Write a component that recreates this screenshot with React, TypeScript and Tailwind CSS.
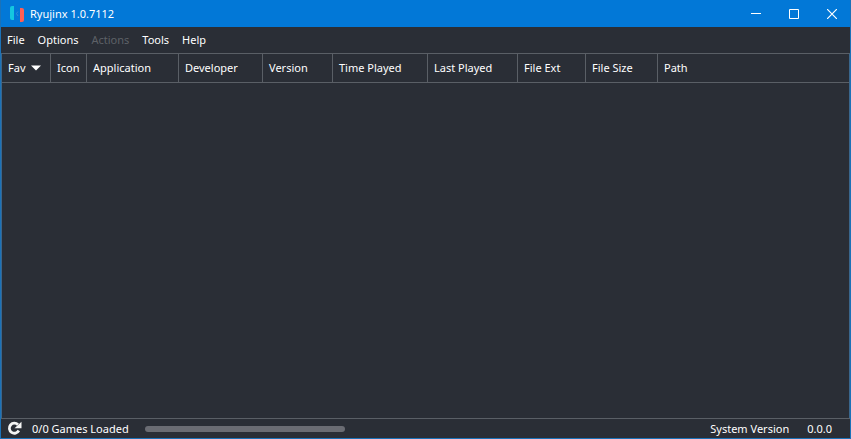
import { useState } from 'react'
import clsx from 'clsx'

type Column = {
  label: string
  width: string
}

const MENU = [
  { label: 'File' },
  { label: 'Options' },
  { label: 'Actions', disabled: true },
  { label: 'Tools' },
  { label: 'Help' },
]

const COLUMNS: Column[] = [
  { label: 'Fav',         width: 'w-[49px]' },
  { label: 'Icon',        width: 'w-9' },
  { label: 'Application', width: 'w-[92px]' },
  { label: 'Developer',   width: 'w-[84px]' },
  { label: 'Version',     width: 'w-[70px]' },
  { label: 'Time Played', width: 'w-[95px]' },
  { label: 'Last Played', width: 'w-[90px]' },
  { label: 'File Ext',    width: 'w-[68px]' },
  { label: 'File Size',   width: 'w-[72px]' },
  { label: 'Path',        width: 'w-auto' },
]

function Logo() {
  return (
    <svg width="16" height="18" viewBox="0 0 16 18" aria-hidden="true">
      <path d="M5 1v14H3A2 2 0 0 1 1 13V3A2 2 0 0 1 3 1z" fill="#14c8e0" />
      <path d="M11 3h2A2 2 0 0 1 15 5v10A2 2 0 0 1 13 17h-2z" fill="#ff5f55" />
      <path d="M9 6.500 7.500 8.500 9 11" fill="none" stroke="#3f93d6" strokeWidth=".8" />
    </svg>
  )
}

function RefreshIcon() {
  return (
    <svg width="16" height="16" viewBox="0 0 16 16" aria-hidden="true">
      <path d="M12 3.800A5 5 0 1 0 12.800 9.500" fill="none" stroke="#f4f4f4" strokeWidth="2.800" />
      <path d="M15.500 .8v6.500H8.500z" fill="#f4f4f4" />
    </svg>
  )
}

function TitleBar() {
  const button = 'flex w-[38px] items-center justify-center hover:bg-white/10'
  return (
    <header className="flex h-[27px] shrink-0 bg-[#0278d7] pl-2">
      <div className="flex flex-1 items-center gap-[5px]">
        <Logo />
        <h1>Ryujinx 1.0.7112</h1>
      </div>
      <div className="-mr-px flex">
        <button className={button} aria-label="Minimize">
          <svg width="10" height="10" viewBox="0 0 10 10"><path d="M0 4.500h10" stroke="#fff" /></svg>
        </button>
        <button className={button} aria-label="Maximize">
          <svg width="10" height="10" viewBox="0 0 10 10"><path d="M.5.5h9v9h-9z" fill="none" stroke="#fff" /></svg>
        </button>
        <button className={button} aria-label="Close">
          <svg width="10" height="10" viewBox="0 0 10 10"><path d="m0 0 10 10M10 0 0 10" stroke="#fff" strokeWidth="1.200" /></svg>
        </button>
      </div>
    </header>
  )
}

function GameTable() {
  const [sorted, setSorted] = useState('Fav')

  return (
    <main className="min-h-0 flex-1 overflow-auto border-x border-t border-[#5a5f66] border-l-[#3a668c] border-r-[#3a668c]">
      <table className="w-full table-fixed border-separate border-spacing-0">
        <thead>
          <tr>
            {COLUMNS.map(({ label, width }) => (
              <th
                key={label}
                className={clsx('h-[29px] border-r border-b border-[#5a5f66] p-0 text-left font-normal last:border-r-0', width)}
              >
                <button
                  onClick={() => setSorted(label)}
                  className="flex w-full items-center gap-1.5 pl-1.5 whitespace-nowrap"
                >
                  {label}
                  {sorted === label && (
                    <svg width="10" height="6" viewBox="0 0 10 6" aria-hidden="true">
                      <path d="M0 .5h10L5 5.500z" fill="#fff" />
                    </svg>
                  )}
                </button>
              </th>
            ))}
          </tr>
        </thead>
        <tbody />
      </table>
    </main>
  )
}

function StatusBar() {
  return (
    <footer className="flex h-5 shrink-0 items-center border-t border-[#5a5f66] pr-[18px] pl-[5px]">
      <button aria-label="Refresh">
        <RefreshIcon />
      </button>
      <span className="ml-2.5">0/0 Games Loaded</span>
      <div role="progressbar" aria-label="Loading games" className="ml-4 h-1.5 w-[200px] rounded-full bg-[#6a6c73]" />
      <span className="ml-auto">System Version</span>
      <span className="ml-[18px]">0.0.0</span>
    </footer>
  )
}

export default function App() {
  return (
    <div className="flex h-screen flex-col border border-t-0 border-[#1b72b8] bg-[#2a2e36] font-['Noto_Sans','Open_Sans',sans-serif] text-[11px] leading-4 text-white">
      <TitleBar />
      <nav className="flex h-[26px] shrink-0 items-center gap-px">
        {MENU.map(({ label, disabled }) => (
          <button key={label} disabled={disabled} className="px-1.5 disabled:text-[#5d6167]">
            {label}
          </button>
        ))}
      </nav>
      <GameTable />
      <StatusBar />
    </div>
  )
}
